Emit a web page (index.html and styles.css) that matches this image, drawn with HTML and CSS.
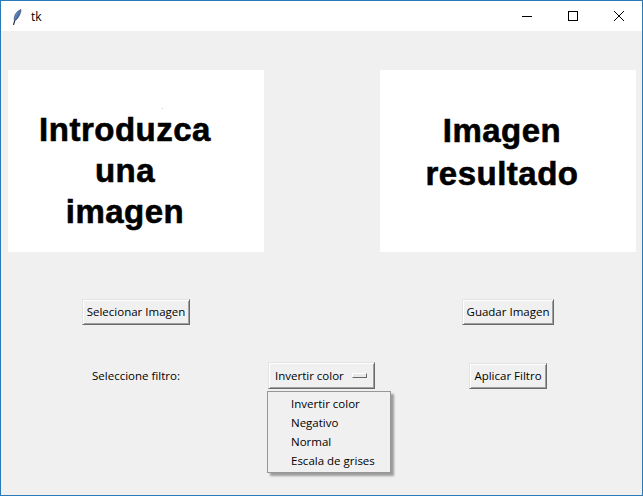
FILE: index.html
```html
<!DOCTYPE html>
<html>
<head>
<meta charset="utf-8">
<title>tk</title>
<link rel="stylesheet" href="styles.css">
</head>
<body>
<div class="window">
  <div class="titlebar">
    <div class="title">
      <svg class="feather" width="10" height="16" viewBox="0 0 10 16">
        <defs>
          <linearGradient id="fg" x1="0" y1="0" x2="1" y2="1">
            <stop offset="0" stop-color="#9ab8e0"/>
            <stop offset="0.6" stop-color="#3f69a8"/>
            <stop offset="1" stop-color="#1c2f55"/>
          </linearGradient>
        </defs>
        <path d="M9 0.5 C6 1.5 3.5 4 2.5 7.5 C2 9.5 2.2 11 2.6 12 C4.5 11 6.5 8.5 7.8 5.5 C8.6 3.6 9 2 9 0.5 Z" fill="url(#fg)" stroke="#2a3f66" stroke-width="0.6"/>
        <path d="M2.6 12 L1.6 15.5" stroke="#1c2540" stroke-width="1.1" stroke-linecap="round"/>
      </svg>
      <span class="title-text">tk</span>
    </div>
    <div class="controls">
      <div class="ctl">
        <svg width="12" height="12" viewBox="0 0 12 12"><path d="M1 6.5 H11" stroke="#000" stroke-width="1"/></svg>
      </div>
      <div class="ctl">
        <svg width="12" height="12" viewBox="0 0 12 12"><rect x="1.5" y="1.5" width="9" height="9" fill="none" stroke="#000" stroke-width="1"/></svg>
      </div>
      <div class="ctl">
        <svg width="12" height="12" viewBox="0 0 12 12"><path d="M1 1 L11 11 M11 1 L1 11" stroke="#000" stroke-width="1"/></svg>
      </div>
    </div>
  </div>

  <div class="content">
    <div class="grid">
      <div class="picture picture-left">
        <div class="pic-line">Introduzca</div>
        <div class="pic-line">una</div>
        <div class="pic-line">imagen</div>
        <span class="speck"></span>
      </div>
      <div></div>
      <div class="picture picture-right">
        <div class="pic-line">Imagen</div>
        <div class="pic-line">resultado</div>
      </div>

      <button class="tkbtn">Selecionar Imagen</button>
      <div></div>
      <button class="tkbtn">Guadar Imagen</button>

      <span class="label">Seleccione filtro:</span>
      <div class="optmenu">
        <span>Invertir color</span>
        <span class="indicator"></span>
      </div>
      <button class="tkbtn">Aplicar Filtro</button>
    </div>

    <div class="menu">
      <div class="menu-item">Invertir color</div>
      <div class="menu-item">Negativo</div>
      <div class="menu-item">Normal</div>
      <div class="menu-item">Escala de grises</div>
    </div>
  </div>
</div>
</body>
</html>
```

FILE: styles.css
```css
* { box-sizing: border-box; }

html, body {
  margin: 0;
  padding: 0;
  width: 643px;
  height: 496px;
  overflow: hidden;
  background: #f0f0f0;
}

.window {
  width: 643px;
  height: 496px;
  border: 1px solid #2b79b6;
  background: #f0f0f0;
  display: flex;
  flex-direction: column;
  font-family: "Open Sans", "Liberation Sans", sans-serif;
  font-size: 11.5px;
  color: #000;
}

.titlebar {
  height: 30px;
  background: #ffffff;
  display: flex;
  justify-content: space-between;
  align-items: stretch;
  flex: 0 0 auto;
}

.title {
  display: flex;
  align-items: center;
  padding-left: 11px;
  gap: 9px;
}

.feather { display: block; margin-top: 1px; }

.title-text {
  font-family: "Open Sans", "Liberation Sans", sans-serif;
  font-size: 12px;
  color: #000;
  margin-top: 1px;
}

.controls { display: flex; }

.ctl {
  width: 46px;
  display: flex;
  align-items: center;
  justify-content: center;
}

.ctl svg { display: block; }

.content {
  position: relative;
  flex: 1 1 auto;
  padding: 39px 0 0 7px;
}

.grid {
  display: grid;
  grid-template-columns: 256px 116px 256px;
  grid-template-rows: 182px 73px 64px;
  justify-items: center;
  align-items: end;
}

.picture {
  width: 256px;
  height: 182px;
  background: #ffffff;
  font-family: "Liberation Sans", Arial, sans-serif;
  font-weight: bold;
  font-size: 33px;
  letter-spacing: 0.5px;
  text-align: center;
  padding-top: 39px;
  position: relative;
  color: #000;
  -webkit-text-stroke: 0.6px #000;
}

.picture-left { line-height: 41px; padding-right: 22px; }
.picture-right { line-height: 43px; padding-right: 12px; }

.speck {
  position: absolute;
  left: 154px;
  top: 38px;
  width: 1px;
  height: 1px;
  background: #c8c8c8;
}

.tkbtn {
  font-family: "Open Sans", "Liberation Sans", sans-serif;
  font-size: 11.5px;
  height: 26px;
  padding: 0 4px;
  background: #f0f0f0;
  color: #000;
  border: 1px solid;
  border-color: #e3e3e3 #696969 #696969 #e3e3e3;
  box-shadow: inset 1px 1px 0 #ffffff, inset -1px -1px 0 #a0a0a0;
  line-height: 22px;
  margin: 0;
}

.label {
  height: 27px;
  display: flex;
  align-items: center;
  padding-bottom: 1px;
  font-size: 11.5px;
}

.optmenu {
  width: 107px;
  height: 27px;
  display: flex;
  align-items: center;
  justify-content: space-between;
  padding: 0 7px 1px 6px;
  margin-right: 1px;
  border: 1px solid;
  border-color: #e3e3e3 #696969 #696969 #e3e3e3;
  box-shadow: inset 1px 1px 0 #ffffff, inset -1px -1px 0 #a0a0a0;
  background: #f0f0f0;
}

.indicator {
  width: 15px;
  height: 5px;
  border: 1px solid;
  border-color: #ffffff #696969 #696969 #ffffff;
  background: #e8e8e8;
  margin-top: 1px;
}

.menu {
  position: absolute;
  left: 266px;
  top: 360px;
  width: 124px;
  height: 82px;
  background: #f0f0f0;
  border: 1px solid #979797;
  box-shadow: 3px 3px 2px rgba(0, 0, 0, 0.35);
  padding: 2px 0 0 23px;
}

.menu-item {
  height: 19px;
  line-height: 19px;
  font-size: 11.5px;
  white-space: nowrap;
}
```
